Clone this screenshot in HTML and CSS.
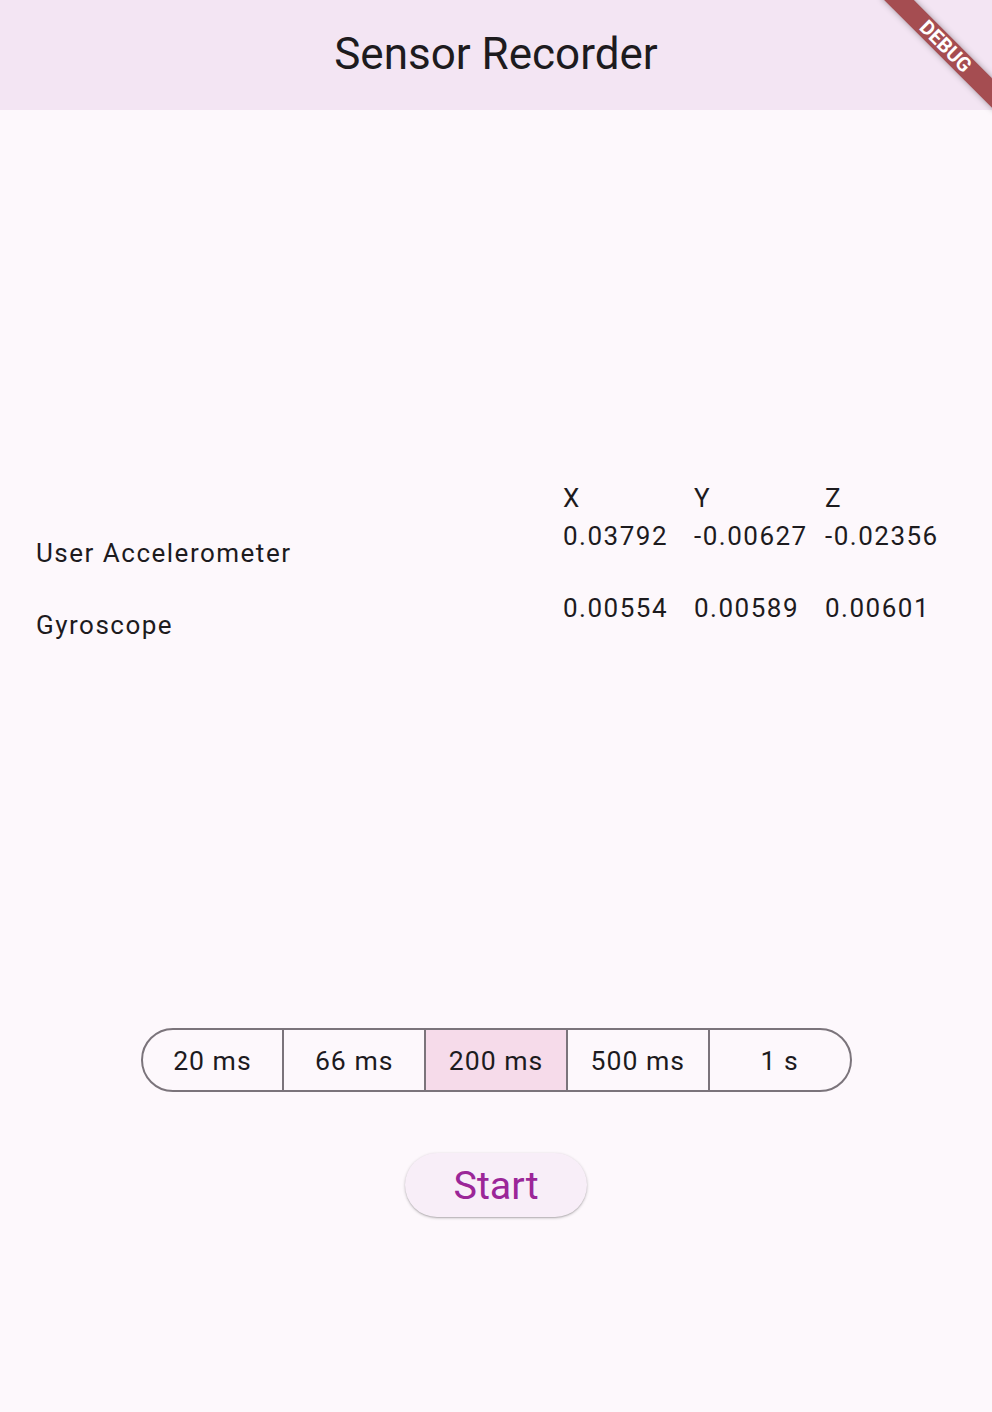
FILE: index.html
```html
<!DOCTYPE html>
<html>
<head>
<meta charset="utf-8">
<link rel="stylesheet" href="styles.css">
</head>
<body>
<div class="app">
  <header class="appbar">
    <h1 class="title">Sensor Recorder</h1>
  </header>
  <main class="content">
    <div class="table">
      <div class="cell head"></div>
      <div class="cell head">X</div>
      <div class="cell head">Y</div>
      <div class="cell head">Z</div>

      <div class="cell label">User Accelerometer</div>
      <div class="cell value">0.03792</div>
      <div class="cell value">-0.00627</div>
      <div class="cell value">-0.02356</div>

      <div class="cell label">Gyroscope</div>
      <div class="cell value">0.00554</div>
      <div class="cell value">0.00589</div>
      <div class="cell value">0.00601</div>
    </div>
  </main>
  <section class="controls">
    <div class="segmented">
      <button class="seg">20 ms</button>
      <button class="seg">66 ms</button>
      <button class="seg selected">200 ms</button>
      <button class="seg">500 ms</button>
      <button class="seg">1 s</button>
    </div>
    <button class="start">Start</button>
  </section>
  <div class="banner">DEBUG</div>
</div>
</body>
</html>
```

FILE: styles.css
```css
* { box-sizing: border-box; }
html, body { margin: 0; padding: 0; }
body {
  font-family: Roboto, "Noto Sans", sans-serif;
  color: #1d1b1e;
  background: #fef7fc;
}
.app {
  position: relative;
  width: 992px;
  height: 1412px;
  overflow: hidden;
  display: flex;
  flex-direction: column;
  background: #fdf8fc;
}
.appbar {
  height: 110px;
  flex: 0 0 110px;
  background: #f3e5f3;
  display: flex;
  align-items: center;
  justify-content: center;
  padding-bottom: 3px;
}
.title {
  margin: 0;
  font-size: 44px;
  font-weight: 400;
  line-height: 1;
  color: #1d1b1e;
}
.content {
  flex: 1;
  display: flex;
  align-items: center;
  padding: 0 36px;
}
.table {
  width: 100%;
  display: grid;
  grid-template-columns: 1fr 131px 131px 131px;
  font-size: 26px;
  letter-spacing: 1.5px;
  line-height: 38px;
  margin-top: 2px;
}
.cell { white-space: nowrap; }
.label {
  padding: 17px 0;
  align-self: center;
}
.value { align-self: start; }
.controls {
  display: flex;
  flex-direction: column;
  align-items: center;
  padding-bottom: 195px;
}
.segmented {
  display: flex;
  width: 711px;
  height: 64px;
  border: 2px solid #7b747b;
  border-radius: 32px;
  overflow: hidden;
  background: #fdf8fc;
}
.seg {
  flex: 1;
  border: 0;
  border-left: 2px solid #7b747b;
  background: transparent;
  font-family: Roboto, "Noto Sans", sans-serif;
  font-size: 26.6px;
  letter-spacing: 1px;
  color: #1d1b1e;
  padding: 0;
}
.seg:first-child { border-left: 0; }
.seg.selected { background: #f6dbea; }
.start {
  margin-top: 61px;
  width: 182px;
  height: 64px;
  border: 0;
  border-radius: 32px;
  background: #f8eef8;
  color: #9b2698;
  font-family: Roboto, "Noto Sans", sans-serif;
  font-size: 39.5px;
  font-weight: 400;
  box-shadow: 0 1px 3px rgba(0,0,0,0.25), 0 1px 1px rgba(0,0,0,0.1);
}
.banner {
  position: absolute;
  left: 865px;
  top: 36px;
  width: 161px;
  height: 21px;
  transform: rotate(45deg);
  background: #a54d51;
  color: #ffffff;
  font-size: 20px;
  font-weight: 700;
  line-height: 21px;
  text-align: center;
  box-shadow: 0 0 6px rgba(0,0,0,0.35);
}
```
